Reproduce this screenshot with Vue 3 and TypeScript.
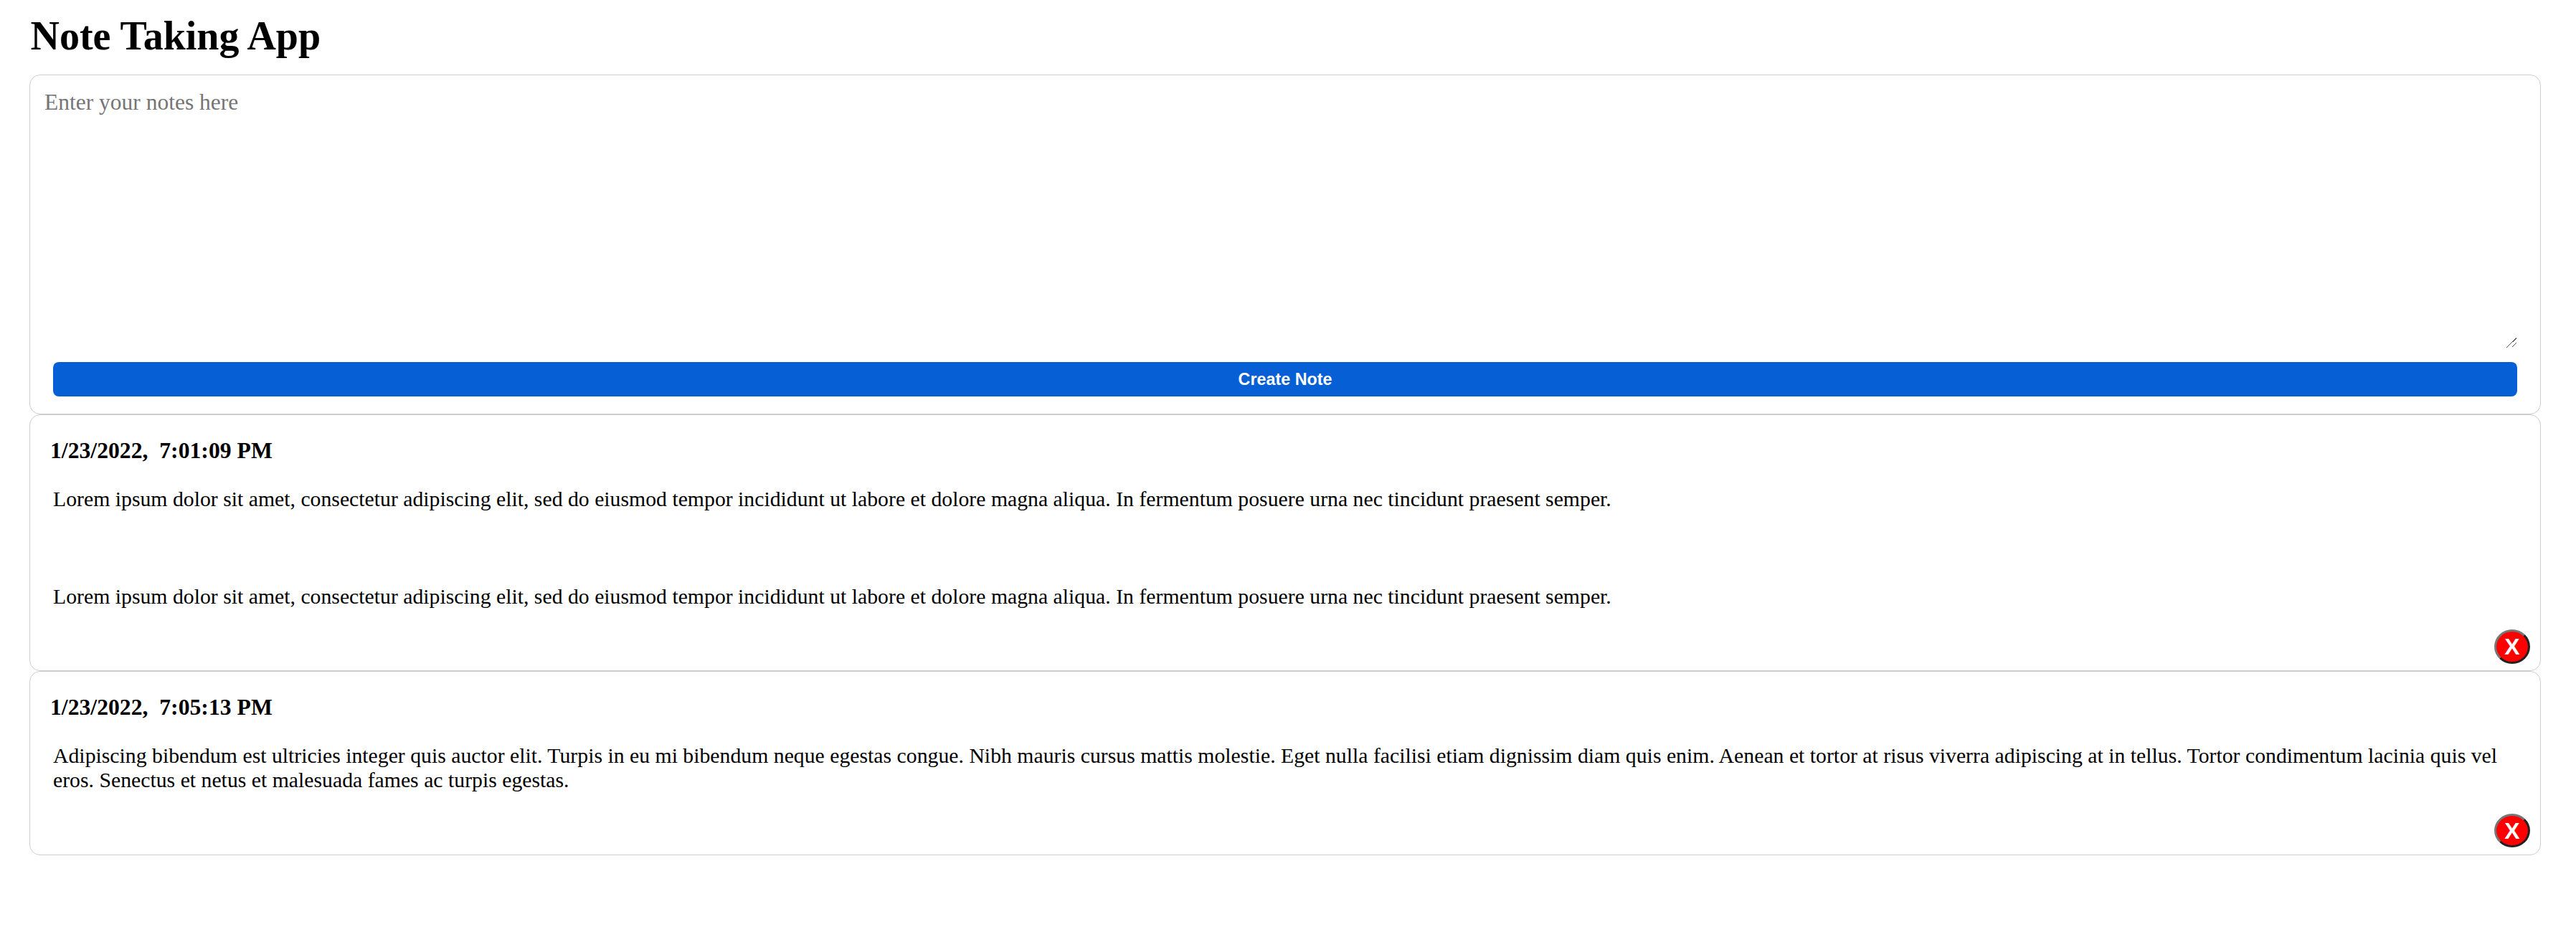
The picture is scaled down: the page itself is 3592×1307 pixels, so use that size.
<script setup lang="ts">
import { ref } from 'vue'

interface Note {
  id: number
  created: string
  body: string
}

const lorem =
  'Lorem ipsum dolor sit amet, consectetur adipiscing elit, sed do eiusmod tempor incididunt ut labore et dolore magna aliqua. In fermentum posuere urna nec tincidunt praesent semper.'

const draft = ref('')
const notes = ref<Note[]>([
  { id: 1, created: '1/23/2022,\u00a0 7:01:09 PM', body: `${lorem}\n\n\n\n${lorem}` },
  {
    id: 2,
    created: '1/23/2022,\u00a0 7:05:13 PM',
    body: 'Adipiscing bibendum est ultricies integer quis auctor elit. Turpis in eu mi bibendum neque egestas congue. Nibh mauris cursus mattis molestie. Eget nulla facilisi etiam dignissim diam quis enim. Aenean et tortor at risus viverra adipiscing at in tellus. Tortor condimentum lacinia quis vel eros. Senectus et netus et malesuada fames ac turpis egestas.',
  },
])

function createNote() {
  const text = draft.value.trim()
  if (!text) return
  const now = new Date()
  notes.value.push({
    id: now.getTime(),
    created: `${now.toLocaleDateString('en-US')},\u00a0 ${now.toLocaleTimeString('en-US')}`,
    body: text,
  })
  draft.value = ''
}

function removeNote(id: number) {
  notes.value = notes.value.filter((n) => n.id !== id)
}
</script>

<template>
  <main class="app">
    <h1 class="title">Note Taking App</h1>
    <form class="card editor" @submit.prevent="createNote">
      <div class="field">
        <textarea v-model="draft" class="input" placeholder="Enter your notes here"></textarea>
        <svg class="grip" width="15" height="14" viewBox="0 0 15 14" shape-rendering="crispEdges">
          <path d="M0.5 13.5L14 0.5M7.5 13.5L14 7" fill="none" stroke="#555" stroke-width="1" />
        </svg>
      </div>
      <button class="create" type="submit">Create Note</button>
    </form>
    <article v-for="note in notes" :key="note.id" class="card note">
      <h2 class="date">{{ note.created }}</h2>
      <p class="body">{{ note.body }}</p>
      <button class="remove" type="button" @click="removeNote(note.id)">X</button>
    </article>
  </main>
</template>

<style>
body {
  margin: 0;
  background: #fff;
}
</style>

<style scoped>
.app {
  padding: 0 49px 0 41px;
  font-family: "Liberation Serif", "Times New Roman", serif;
  color: #000;
}
.title {
  margin: 0;
  height: 104px;
  padding: 19px 0 0 1.5px;
  box-sizing: border-box;
  font-size: 56px;
  line-height: 62px;
  font-weight: 700;
}
.card {
  box-sizing: border-box;
  border: 1px solid #ccc;
  border-radius: 15px;
  background: #fff;
}
.editor {
  height: 474px;
  display: flex;
  flex-direction: column;
  padding: 14px 32px 24px 13px;
}
.field {
  position: relative;
  flex: 1;
  margin-bottom: 18px;
  display: flex;
}
.input {
  flex: 1;
  box-sizing: border-box;
  margin: 0;
  padding: 6px 7px;
  border: 0;
  outline: 0;
  resize: none;
  background: transparent;
  font-family: inherit;
  font-size: 31.5px;
  line-height: 36px;
}
.input::placeholder {
  color: #757575;
}
.grip {
  position: absolute;
  right: 0;
  bottom: 2px;
}
.create {
  flex: none;
  height: 48px;
  margin: 0 0 0 19px;
  padding: 0;
  border: 0;
  border-radius: 8px;
  background: #065fd4;
  color: #fff;
  font: 700 23.33px/48px "Liberation Sans", Arial, sans-serif;
}
.note {
  display: flex;
  flex-direction: column;
  padding: 32px 14px 9px 28px;
}
.date {
  margin: 0 0 32px;
  font-size: 31.7px;
  line-height: 36px;
  font-weight: 700;
}
.body {
  margin: 0 18px 29px 4px;
  font-size: 29.75px;
  line-height: 34px;
  white-space: pre-wrap;
}
.remove {
  align-self: flex-end;
  box-sizing: border-box;
  width: 50px;
  height: 48px;
  padding: 0;
  border: 3px solid;
  border-color: #767676 #212121 #212121 #767676;
  border-radius: 50%;
  background: #f00;
  color: #fff;
  font: 700 32px/42px "Liberation Sans", Arial, sans-serif;
}
.note:last-child {
  padding-bottom: 10px;
}
.note:last-child .body {
  margin-bottom: 30px;
}
.note:last-child .remove {
  height: 47px;
}
</style>
